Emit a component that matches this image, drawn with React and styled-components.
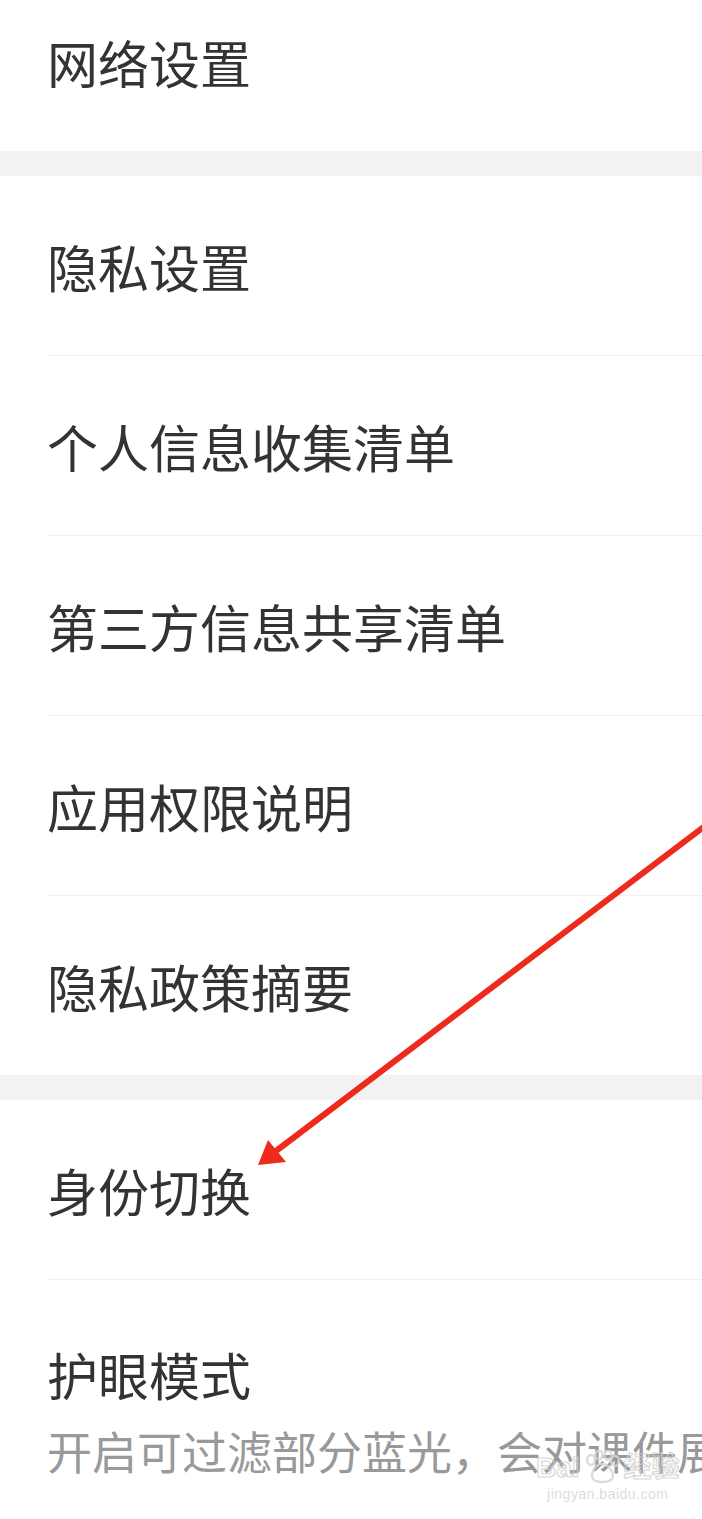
import React from 'react';
import styled, { createGlobalStyle } from 'styled-components';

const GlobalStyle = createGlobalStyle`
  html, body {
    margin: 0;
    padding: 0;
    background: #fff;
  }
  body {
    font-family: "Noto Sans CJK SC", "Noto Sans", sans-serif;
  }
`;

const groups = [
  [{ title: '网络设置' }],
  [
    { title: '隐私设置' },
    { title: '个人信息收集清单' },
    { title: '第三方信息共享清单' },
    { title: '应用权限说明' },
    { title: '隐私政策摘要' },
  ],
  [
    { title: '身份切换' },
    { title: '护眼模式', desc: '开启可过滤部分蓝光，会对课件展示颜色产生影响' },
  ],
];

const Screen = () => (
  <>
    <GlobalStyle />
    <Viewport>
      <Page>
        {groups.map((group, gi) => (
          <React.Fragment key={gi}>
            {gi > 0 && <Band />}
            <Group>
              {group.map((item) =>
                item.desc ? (
                  <Item key={item.title}>
                    <EyeBlock>
                      <Title>{item.title}</Title>
                      <Sub>{item.desc}</Sub>
                    </EyeBlock>
                  </Item>
                ) : (
                  <Item key={item.title}>
                    <Inner>
                      <Title>{item.title}</Title>
                    </Inner>
                  </Item>
                )
              )}
            </Group>
          </React.Fragment>
        ))}
      </Page>
      <Arrow viewBox="0 0 702 1519" width="702" height="1519">
        <line x1="705" y1="826" x2="276" y2="1151" stroke="#ee2a1c" strokeWidth="6" strokeLinecap="round" />
        <polygon points="258,1165 268,1140 286,1162" fill="#ee2a1c" />
      </Arrow>
      <Watermark>
        <Brand>
          <span>Bai</span>
          <Paw viewBox="0 0 40 34" width="40" height="34">
            <g fill="none" stroke="#d6d6d6" strokeWidth="2.4">
              <ellipse cx="9" cy="10" rx="4" ry="5" />
              <ellipse cx="17" cy="5" rx="3.5" ry="4.5" />
              <ellipse cx="26" cy="5" rx="3.5" ry="4.5" />
              <ellipse cx="33" cy="11" rx="4" ry="5" />
              <path d="M20 14 C13 14 8 24 11 29 C14 33 27 33 30 29 C33 24 27 14 20 14 Z" />
            </g>
          </Paw>
          <span>经验</span>
        </Brand>
        <Domain>jingyan.baidu.com</Domain>
      </Watermark>
    </Viewport>
  </>
);

const Viewport = styled.div`
  position: relative;
  width: 702px;
  height: 1519px;
  overflow: hidden;
  background: #fff;
`;

const Page = styled.div`
  margin-top: -28px;
`;

const Band = styled.div`
  height: 25px;
  background: #f2f2f2;
`;

const Group = styled.div`
  background: #fff;
`;

const Item = styled.div`
  padding-left: 47px;
  background: #fff;
`;

const Inner = styled.div`
  display: flex;
  align-items: center;
  height: 179px;
  border-bottom: 1px solid #efefef;

  ${Item}:last-child > & {
    border-bottom: none;
  }
`;

const Title = styled.div`
  font-size: 51px;
  line-height: 60px;
  color: #333;
  white-space: nowrap;
`;

const EyeBlock = styled.div`
  display: flex;
  flex-direction: column;
  gap: 19px;
  padding-top: 64px;
  height: 220px;
  box-sizing: border-box;
`;

const Sub = styled.div`
  font-size: 45px;
  line-height: 56px;
  color: #999;
  white-space: nowrap;
`;

const Arrow = styled.svg`
  position: absolute;
  left: 0;
  top: 0;
  pointer-events: none;
`;

const Watermark = styled.div`
  position: absolute;
  left: 536px;
  top: 1452px;
  display: flex;
  flex-direction: column;
  align-items: center;
  opacity: 0.85;
`;

const Brand = styled.div`
  display: flex;
  align-items: center;
  gap: 2px;
  font-family: "Liberation Sans", "Noto Sans CJK SC", sans-serif;
  font-size: 28px;
  font-weight: bold;
  color: transparent;
  -webkit-text-stroke: 1.2px #d2d2d2;
  line-height: 32px;
`;

const Paw = styled.svg`
  display: block;
  margin-top: -2px;
`;

const Domain = styled.div`
  font-family: "Liberation Sans", sans-serif;
  font-size: 14px;
  color: #d8d8d8;
  letter-spacing: 0.5px;
  margin-top: 2px;
`;

export default Screen;
